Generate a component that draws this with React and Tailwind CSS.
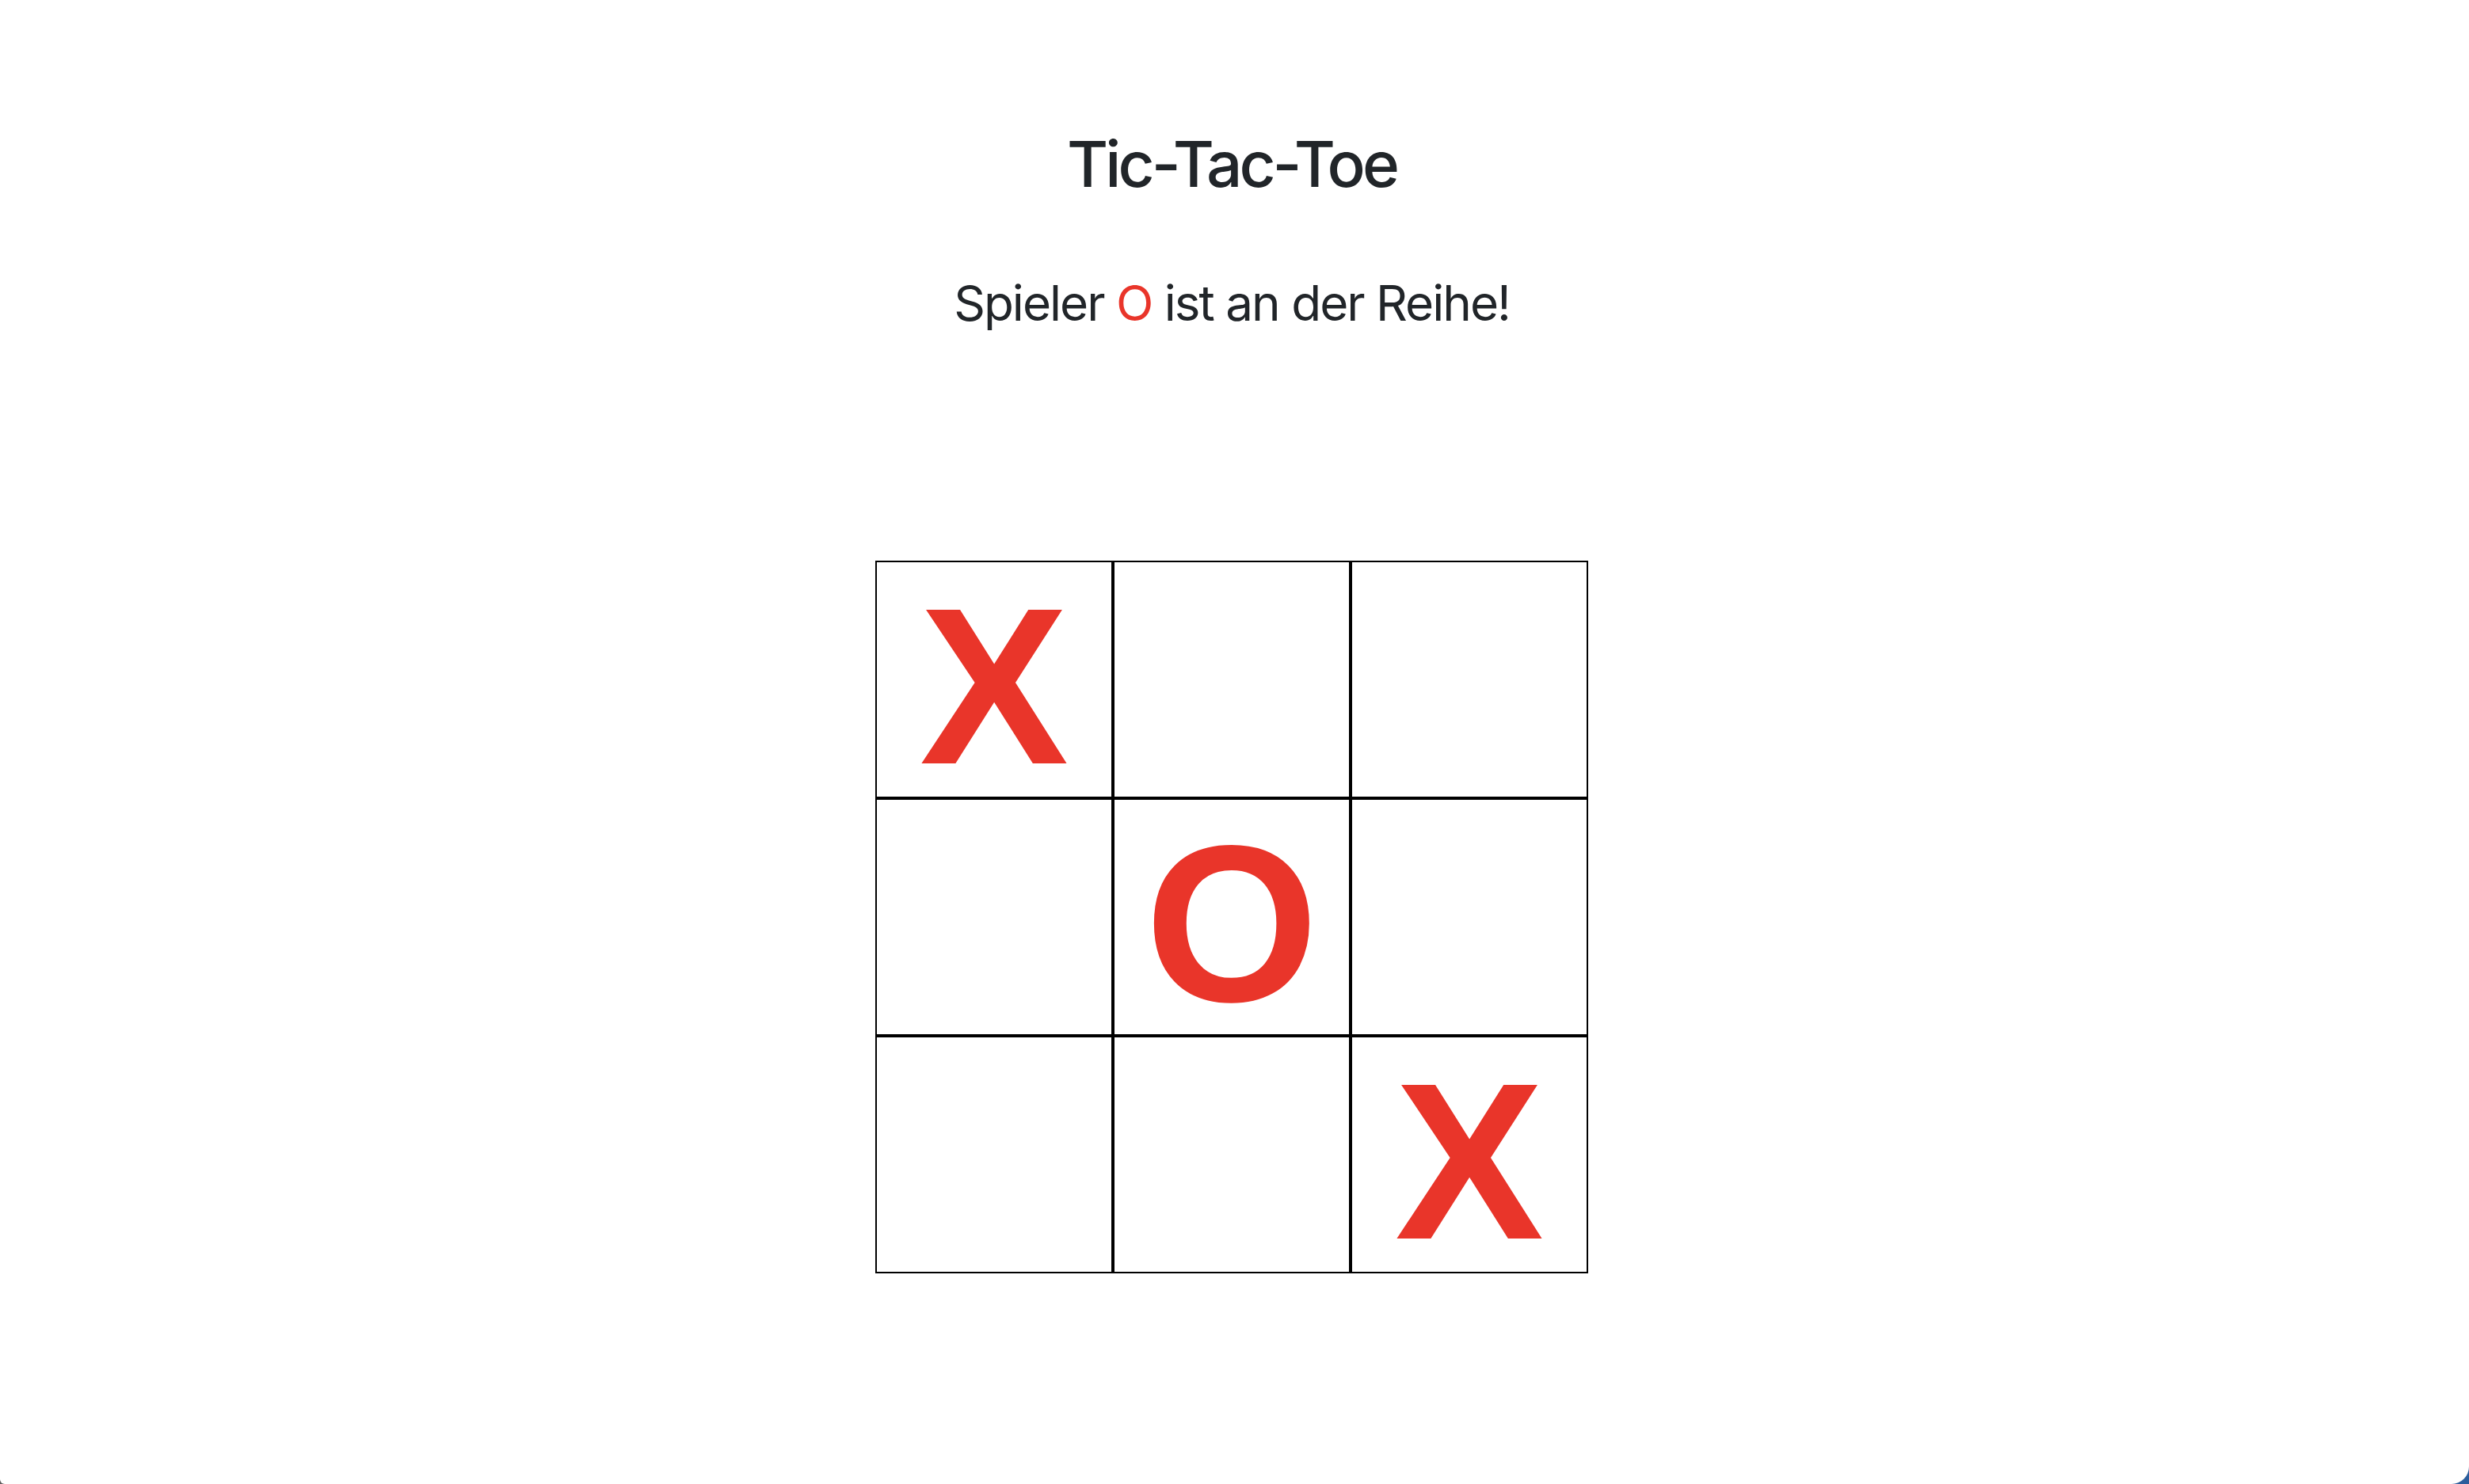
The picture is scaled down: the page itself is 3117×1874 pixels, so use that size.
import { useState } from 'react';

// Spielfeld: Startstellung wie im Screenshot
const START = ['X', '', '', '', 'O', '', '', '', 'X'];

const Cell = ({ value, onClick }) => (
  <button
    type="button"
    onClick={onClick}
    className="w-[300px] h-[300px] border-2 border-black bg-white flex items-center justify-center pt-[17px] text-[282px] leading-none font-bold font-['Liberation_Sans',Arial,sans-serif] text-[#e9352a] cursor-pointer"
  >
    {value}
  </button>
);

export default function App() {
  const [board, setBoard] = useState(START);
  const xCount = board.filter((v) => v === 'X').length;
  const oCount = board.filter((v) => v === 'O').length;
  const next = xCount > oCount ? 'O' : 'X';

  const play = (i) => {
    if (board[i]) return;
    const copy = [...board];
    copy[i] = next;
    setBoard(copy);
  };

  return (
    <div className="h-screen overflow-hidden bg-linear-to-r from-[#5c5c5c] to-[#2b5e9c]">
      <div className="h-full bg-white rounded-bl-[6px] rounded-br-[22px] pr-[7px] flex flex-col items-center font-['Inter',sans-serif] text-[#212529]">
        <h1 className="mt-[159px] text-[80px] leading-[1.2] font-medium tracking-[-4px]">Tic-Tac-Toe</h1>
        <p className="mt-[81px] text-[62px] leading-[1.5] tracking-[-2px]">
          Spieler <span className="text-[#e9352a]">{next}</span> ist an der Reihe!
        </p>
        <div className="mt-[279px] grid grid-cols-[repeat(3,300px)]">
          {board.map((v, i) => (
            <Cell key={i} value={v} onClick={() => play(i)} />
          ))}
        </div>
      </div>
    </div>
  );
}
